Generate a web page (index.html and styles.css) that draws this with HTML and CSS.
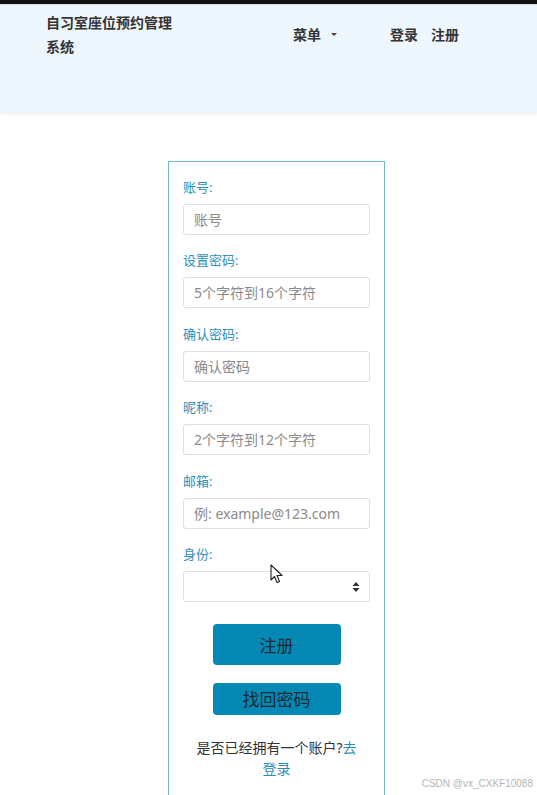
FILE: index.html
```html
<!DOCTYPE html>
<html lang="zh-CN">
<head>
  <meta charset="UTF-8">
  <meta name="viewport" content="width=device-width, initial-scale=1.0">
  <title>注册</title>
  <link rel="stylesheet" href="styles.css">
</head>
<body>
  <div class="topbar"></div>

  <!-- 顶部导航 -->
  <header class="header">
    <div class="brand">自习室座位预约管理系统</div>
    <div class="menu">菜单 <span class="caret"></span></div>
    <nav class="auth">
      <a href="#">登录</a>
      <a href="#">注册</a>
    </nav>
  </header>

  <!-- 注册表单 -->
  <main class="card">
    <div class="field">
      <label>账号:</label>
      <input type="text" placeholder="账号">
    </div>
    <div class="field">
      <label>设置密码:</label>
      <input type="password" placeholder="5个字符到16个字符">
    </div>
    <div class="field">
      <label>确认密码:</label>
      <input type="password" placeholder="确认密码">
    </div>
    <div class="field">
      <label>昵称:</label>
      <input type="text" placeholder="2个字符到12个字符">
    </div>
    <div class="field">
      <label>邮箱:</label>
      <input type="text" placeholder="例: example@123.com">
    </div>
    <div class="field">
      <label>身份:</label>
      <div class="select-wrap">
        <select></select>
        <svg class="select-arrow" width="8" height="12" viewBox="0 0 8 12">
          <path d="M4 1 L7.5 5 L0.5 5 Z M4 11 L7.5 7 L0.5 7 Z" fill="#333"/>
        </svg>
      </div>
    </div>

    <div class="buttons">
      <button class="btn btn-big">注册</button>
      <button class="btn">找回密码</button>
    </div>

    <p class="login-tip">是否已经拥有一个账户?<a href="#">去登录</a></p>
  </main>

  <!-- 鼠标指针 -->
  <svg class="cursor" width="14" height="21" viewBox="0 0 14 21">
    <path d="M1 1 L1 16 L4.5 12.5 L7 18.5 L9.5 17.5 L7 11.5 L12 11.5 Z" fill="#fff" stroke="#222" stroke-width="1.1" stroke-linejoin="round"/>
  </svg>

  <div class="watermark">CSDN @vx_CXKF10088</div>
</body>
</html>
```

FILE: styles.css
```css
/* Generale */
body {
  margin: 0;
  padding: 0;
  height: 795px;
  overflow: hidden;
  background: #fff;
  font-family: "Noto Sans", "Noto Sans CJK SC", sans-serif;
  color: #333;
  position: relative;
}

.topbar {
  height: 4px;
  background: #111;
  border-bottom: 1px solid #dde3ea;
}

/* Header */
.header {
  height: 101px;
  padding-top: 6px;
  background: #eef6fe;
  box-shadow: 0 2px 4px rgba(0, 0, 0, 0.07);
  display: flex;
  align-items: flex-start;
}

.brand {
  width: 132px;
  margin-left: 46px;
  font-size: 14px;
  font-weight: bold;
  line-height: 23.5px;
  color: #333;
}

.menu {
  margin-left: 115px;
  margin-top: 12px;
  font-size: 14px;
  font-weight: bold;
  line-height: 23px;
  display: flex;
  align-items: center;
  gap: 10px;
}

.caret {
  width: 0;
  height: 0;
  border-left: 3px solid transparent;
  border-right: 3px solid transparent;
  border-top: 3px solid #444;
}

.auth {
  margin-left: 53px;
  margin-top: 12px;
  display: flex;
  gap: 13px;
}

.auth a {
  font-size: 14px;
  font-weight: bold;
  line-height: 23px;
  color: #333;
  text-decoration: none;
}

/* Card */
.card {
  width: 187px;
  margin: 49px 0 0 168px;
  padding: 15px 14px 40px;
  border: 1px solid #6fb8cc;
}

.field {
  margin-bottom: 15.4px;
}

.field label {
  display: block;
  font-size: 13px;
  line-height: 20px;
  color: #2e8fb9;
  margin-bottom: 7px;
}

.field input,
.field select {
  box-sizing: border-box;
  width: 100%;
  height: 31px;
  padding: 0 10px;
  border: 1px solid #dcdfe3;
  border-radius: 3px;
  font-family: "Noto Sans", "Noto Sans CJK SC", sans-serif;
  font-size: 14px;
  color: #333;
  background: #fff;
  outline: none;
}

.field input::placeholder {
  color: #8a8a8a;
}

.select-wrap {
  position: relative;
}

.field select {
  appearance: none;
  -webkit-appearance: none;
}

.select-arrow {
  position: absolute;
  right: 10px;
  top: 10px;
}

/* Bottoni */
.buttons {
  display: flex;
  flex-direction: column;
  align-items: center;
  gap: 18px;
  margin-top: 22px;
}

.btn {
  width: 128px;
  height: 32px;
  border: none;
  border-radius: 4px;
  background: #0688b5;
  color: #1d2a33;
  font-family: "Noto Sans CJK SC", sans-serif;
  font-size: 17px;
  cursor: pointer;
}

.btn-big {
  height: 41px;
}

.login-tip {
  margin: 22px 0 0;
  padding: 0 9px;
  font-size: 14px;
  line-height: 21px;
  text-align: center;
  color: #333;
}

.login-tip a {
  color: #2a8cb8;
  text-decoration: none;
}

.cursor {
  position: absolute;
  left: 270px;
  top: 564px;
}

.watermark {
  position: absolute;
  right: 4px;
  bottom: 6px;
  font-family: "Liberation Sans", sans-serif;
  font-size: 10px;
  color: #b5b5b5;
}
```
